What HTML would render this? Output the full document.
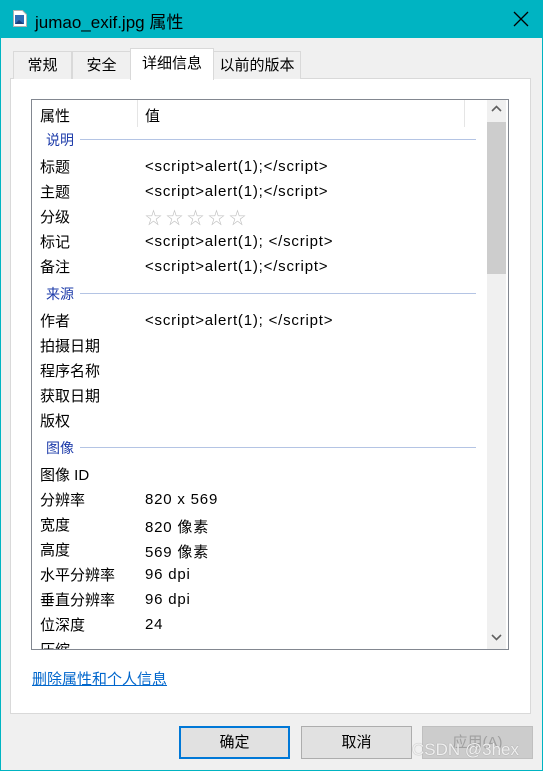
<!DOCTYPE html>
<html><head><meta charset="utf-8"><style>
*{margin:0;padding:0;box-sizing:border-box}
body{width:543px;height:771px;background:#00b4c2;font-family:"Liberation Sans","Noto Sans CJK SC",sans-serif;font-size:15px;color:#000;position:relative;overflow:hidden}
.a{position:absolute;white-space:nowrap}
.v{font-size:15px;letter-spacing:0.8px;margin-top:2px}
#win{position:absolute;left:1px;top:38px;width:541px;height:732px;background:#f0f0f0}
.tab{position:absolute;top:51px;height:28px;border:1px solid #d9d9d9;border-bottom:none;background:#f0f0f0;text-align:center;line-height:28px;font-size:15px}
#panel{position:absolute;left:10px;top:78px;width:521px;height:636px;background:#fff;border:1px solid #d9d9d9}
#list{position:absolute;left:31px;top:99px;width:478px;height:551px;border:1px solid #828790;background:#fff;overflow:hidden}
.sec{color:#1e3caa}
.ln{position:absolute;height:1px;background:#b4c4e4;left:80px;width:396px}
.btn{position:absolute;top:726px;height:33px;width:111px;border:1px solid #adadad;background:#e1e1e1;text-align:center;line-height:31px}
</style></head><body>
<svg class="a" style="left:13px;top:10px" width="14" height="17" viewBox="0 0 14 17"><path d="M0.5 0.5h9l4 4v12h-13z" fill="#fff" stroke="#b0b0b0"/><rect x="2" y="5" width="9" height="9" fill="#2f6db5"/><path d="M2 14l4-4 5 4z" fill="#1c3f7a"/></svg>
<div class="a" style="left:35px;top:8px;font-size:17px;color:#000">jumao_exif.jpg 属性</div>
<svg class="a" style="left:513px;top:11px" width="16" height="16"><path d="M1 1L15 15M15 1L1 15" stroke="#000" stroke-width="1.3"/></svg>
<div id="win"></div>
<div id="panel"></div>
<div class="tab" style="left:13px;width:59px">常规</div>
<div class="tab" style="left:72px;width:59px">安全</div>
<div class="tab" style="left:213px;width:88px">以前的版本</div>
<div class="tab" style="left:130px;top:48px;height:32px;width:84px;background:#fff;line-height:30px">详细信息</div>
<div id="list">
<div class="a" style="left:432px;top:0;width:1px;height:27px;background:#e5e5e5"></div>
<div class="a" style="left:105px;top:0;width:1px;height:27px;background:#e5e5e5"></div>
<div class="a" style="left:455px;top:0;width:19px;height:549px;background:#f0f0f0"></div>
<div class="a" style="left:455px;top:22px;width:19px;height:152px;background:#cdcdcd"></div>
<svg class="a" style="left:459px;top:5px" width="11" height="8"><path d="M1 6L5.5 1.5L10 6" stroke="#606060" stroke-width="1.6" fill="none"/></svg>
<svg class="a" style="left:459px;top:533px" width="11" height="8"><path d="M1 2L5.5 6.5L10 2" stroke="#606060" stroke-width="1.6" fill="none"/></svg>
</div>
<div class="a" style="left:40px;top:105px">属性</div>
<div class="a" style="left:145px;top:105px">值</div>
<div class="a sec" style="left:46px;top:130px;font-size:14px">说明</div><div class="ln" style="top:139px"></div>
<div class="a" style="left:40px;top:156px">标题</div><div class="a v" style="left:145px;top:156px">&lt;script&gt;alert(1);&lt;/script&gt;</div>
<div class="a" style="left:40px;top:181px">主题</div><div class="a v" style="left:145px;top:181px">&lt;script&gt;alert(1);&lt;/script&gt;</div>
<div class="a" style="left:40px;top:206px">分级</div><div class="a" style="left:145px;top:204px;color:#c0c0c0;font-size:17px;letter-spacing:4px">☆☆☆☆☆</div>
<div class="a" style="left:40px;top:231px">标记</div><div class="a v" style="left:145px;top:231px">&lt;script&gt;alert(1); &lt;/script&gt;</div>
<div class="a" style="left:40px;top:256px">备注</div><div class="a v" style="left:145px;top:256px">&lt;script&gt;alert(1);&lt;/script&gt;</div>
<div class="a sec" style="left:46px;top:284px;font-size:14px">来源</div><div class="ln" style="top:293px"></div>
<div class="a" style="left:40px;top:310px">作者</div><div class="a v" style="left:145px;top:310px">&lt;script&gt;alert(1); &lt;/script&gt;</div>
<div class="a" style="left:40px;top:335px">拍摄日期</div>
<div class="a" style="left:40px;top:360px">程序名称</div>
<div class="a" style="left:40px;top:385px">获取日期</div>
<div class="a" style="left:40px;top:410px">版权</div>
<div class="a sec" style="left:46px;top:438px;font-size:14px">图像</div><div class="ln" style="top:447px"></div>
<div class="a" style="left:40px;top:464px">图像 ID</div>
<div class="a" style="left:40px;top:489px">分辨率</div><div class="a v" style="left:145px;top:489px">820 x 569</div>
<div class="a" style="left:40px;top:514px">宽度</div><div class="a v" style="left:145px;top:514px">820 像素</div>
<div class="a" style="left:40px;top:539px">高度</div><div class="a v" style="left:145px;top:539px">569 像素</div>
<div class="a" style="left:40px;top:564px">水平分辨率</div><div class="a v" style="left:145px;top:564px">96 dpi</div>
<div class="a" style="left:40px;top:589px">垂直分辨率</div><div class="a v" style="left:145px;top:589px">96 dpi</div>
<div class="a" style="left:40px;top:614px">位深度</div><div class="a v" style="left:145px;top:614px">24</div>
<div class="a" style="left:40px;top:639px;height:10px;overflow:hidden">压缩</div>
<div class="a" style="left:32px;top:668px;color:#0066cc;text-decoration:underline;font-size:15px">删除属性和个人信息</div>
<div class="btn" style="left:179px;border:2px solid #0078d7;line-height:29px">确定</div>
<div class="btn" style="left:301px">取消</div>
<div class="btn" style="left:422px;color:#a0a0a0;background:#cccccc;border-color:#bfbfbf">应用(A)</div>
<div class="a" style="left:412px;top:740px;font-size:17px;color:rgba(255,255,255,0.85);text-shadow:0 0 1px #888">CSDN @3hex</div>
</body></html>
